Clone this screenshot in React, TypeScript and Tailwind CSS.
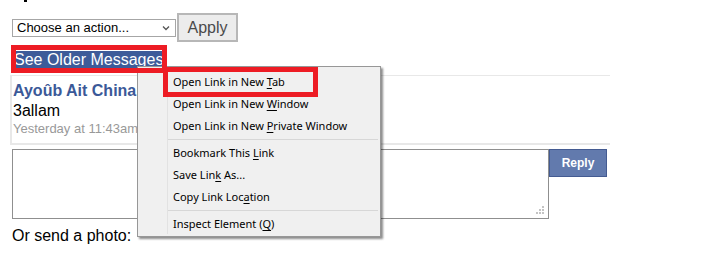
import React from "react";

const menuItems: (string | [string, string, string] | null)[] = [
  ["Open Link in New ", "T", "ab"],
  ["Open Link in New ", "W", "indow"],
  ["Open Link in New ", "P", "rivate Window"],
  null,
  ["Bookmark This ", "L", "ink"],
  ["Save Lin", "k", " As..."],
  ["Copy Link Loc", "a", "tion"],
  null,
  ["Inspect Element (", "Q", ")"],
];

function ContextMenu() {
  return (
    <div className="absolute left-[137px] top-[66px] w-[244px] border border-[#979797] bg-[#f0f0f0] pt-[4px] pb-[1px] shadow-[2px_2px_2px_rgba(0,0,0,0.45)] font-['Noto_Sans',sans-serif] text-[11px] text-black">
      <div className="absolute left-[29px] top-[3px] bottom-[2px] w-px bg-[#e2e2e2]" />
      {menuItems.map((item, i) =>
        item === null ? (
          <div key={i} className="h-[5px] flex items-center pl-[30px] pr-[2px]">
            <div className="h-px w-full bg-[#d7d7d7]" />
          </div>
        ) : (
          <div key={i} className="h-[22px] leading-[22px] pl-[35px] whitespace-pre">
            {item[0]}
            <span className="underline underline-offset-2">{item[1]}</span>
            {item[2]}
          </div>
        )
      )}
    </div>
  );
}

export default function App() {
  return (
    <div className="relative w-[728px] h-[257px] overflow-hidden bg-white font-['Liberation_Sans',Arial,sans-serif]">
      <div className="h-[3px] pl-[24px]">
        <div className="w-[3px] h-[2px] bg-black" />
      </div>

      <div className="mt-[10px] ml-[12px] flex items-center">
        <div className="w-[164px] h-[18px] border border-[#a6a6a6] bg-white flex items-center justify-between pl-[4px] pr-[5px] text-[13px] text-black leading-none">
          <span>Choose an action...</span>
          <svg width="8" height="6" viewBox="0 0 8 6" fill="none">
            <path d="M1 1.5 L4 4.5 L7 1.5" stroke="#555" strokeWidth="1.3" />
          </svg>
        </div>
        <button className="ml-px w-[61px] h-[29px] border-2 border-[#b7b7b7] bg-[#ececec] text-[16px] text-[#4a4a4a] leading-none">
          Apply
        </button>
      </div>

      <div className="mt-[10px] ml-[14px] leading-[16px] text-[16px]">
        <span className="bg-[#3d5b99] text-white">See Older Messages</span>
      </div>

      <div className="mt-[7px] ml-[10px] w-[600px] h-[70px] border-t border-l-2 border-b-2 border-[#e8e8e8] pt-[6px] pl-px">
        <div className="text-[16px] leading-[18px] font-bold text-[#3b5998]">Ayoûb Ait China</div>
        <div className="mt-[2px] text-[16px] leading-[18px] text-black">3allam</div>
        <div className="mt-px text-[13px] leading-[16px] text-[#999999]">Yesterday at 11:43am</div>
      </div>

      <div className="mt-[4px] ml-[12px] flex items-start">
        <div className="relative w-[537px] h-[70px] border border-[#8f8f8f] bg-white">
          <svg className="absolute right-[3px] bottom-[3px]" width="10" height="10" viewBox="0 0 10 10">
            <rect x="7" y="1" width="2" height="2" fill="#c4c4c4" />
            <rect x="4" y="4" width="2" height="2" fill="#c4c4c4" />
            <rect x="7" y="4" width="2" height="2" fill="#c4c4c4" />
            <rect x="1" y="7" width="2" height="2" fill="#c4c4c4" />
            <rect x="4" y="7" width="2" height="2" fill="#c4c4c4" />
            <rect x="7" y="7" width="2" height="2" fill="#c4c4c4" />
          </svg>
        </div>
        <button className="w-[58px] h-[28px] border border-[#445b91] bg-[#627aad] text-white text-[12px] font-bold leading-none">
          Reply
        </button>
      </div>

      <div className="mt-[8px] ml-[12px] text-[16px] leading-[18px] text-black">Or send a photo:</div>

      <ContextMenu />

      <div className="absolute left-[11px] top-[45px] w-[156px] h-[28px] border-[5px] border-[#ed1c24]" />
      <div className="absolute left-[163px] top-[67px] w-[155px] h-[30px] border-[5px] border-[#ed1c24]" />
    </div>
  );
}
